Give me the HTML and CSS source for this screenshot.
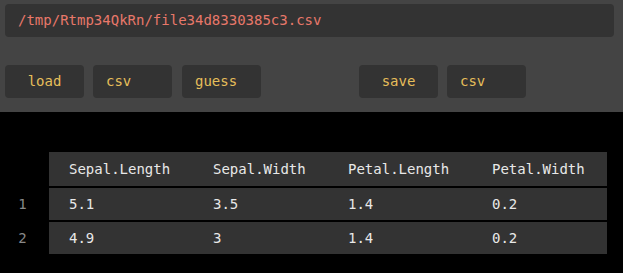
FILE: index.html
```html
<!DOCTYPE html>
<html>
<head>
   <title>csv reader</title>
   <link rel="stylesheet" href="styles.css">
</head>
<body>
<div class="panel">
   <div class="pathBox">/tmp/Rtmp34QkRn/file34d8330385c3.csv</div>
   <div class="toolbar">
      <div class="btn">load</div>
      <div class="field">csv</div>
      <div class="field guess">guess</div>
      <div class="btn save">save</div>
      <div class="field">csv</div>
   </div>
</div>

<table class="grid" cellspacing="0" cellpadding="0">
   <tr class="head">
      <td class="rowName"></td>
      <td class="c1">Sepal.Length</td>
      <td class="c2">Sepal.Width</td>
      <td class="c1">Petal.Length</td>
      <td class="c2">Petal.Width</td>
   </tr>
   <tr>
      <td class="rowName">1</td>
      <td>5.1</td>
      <td>3.5</td>
      <td>1.4</td>
      <td>0.2</td>
   </tr>
   <tr>
      <td class="rowName">2</td>
      <td>4.9</td>
      <td>3</td>
      <td>1.4</td>
      <td>0.2</td>
   </tr>
</table>
</body>
</html>
```

FILE: styles.css
```css
body {
   background-color: rgb(0,0,0);
   font-family: "DejaVu Sans Mono", "Liberation Mono", monospace;
   font-size: 14px;
   margin: 0px;
   padding: 0px;
}

/* top panel */
.panel {
   background-color: rgb(68,68,68);
   height: 112px;
   box-sizing: border-box;
   padding: 4px 9px 0 5px;
}
.pathBox {
   background-color: rgb(51,51,51);
   color: rgb(232,120,106);
   border-radius: 4px;
   height: 33px;
   line-height: 33px;
   padding-left: 13px;
   margin-bottom: 28px;
}
.toolbar {
   display: flex;
   gap: 9px;
}
.btn, .field {
   background-color: rgb(51,51,51);
   color: rgb(230,190,90);
   border-radius: 4px;
   width: 79px;
   height: 33px;
   line-height: 32px;
}
.btn {
   text-align: center;
}
.field {
   padding-left: 13px;
   box-sizing: border-box;
}
.guess {
   margin-left: 1px;
}
.save {
   margin-left: 89px;
}

/* data table */
.grid {
   margin-top: 40px;
   border-collapse: collapse;
   color: rgb(232,232,232);
}
.grid td {
   background-color: rgb(51,51,51);
   height: 32px;
   padding: 0 0 0 20px;
   border-top: 2px solid rgb(0,0,0);
}
.grid tr.head td {
   height: 34px;
   border-top: 0;
}
.grid td.rowName {
   background-color: rgb(0,0,0);
   color: rgb(136,136,136);
   width: 49px;
   padding: 0;
   text-align: center;
   box-sizing: border-box;
   padding-right: 4px;
}
.grid td.c1 {
   width: 124px;
}
.grid td.c2 {
   width: 115px;
}
```
